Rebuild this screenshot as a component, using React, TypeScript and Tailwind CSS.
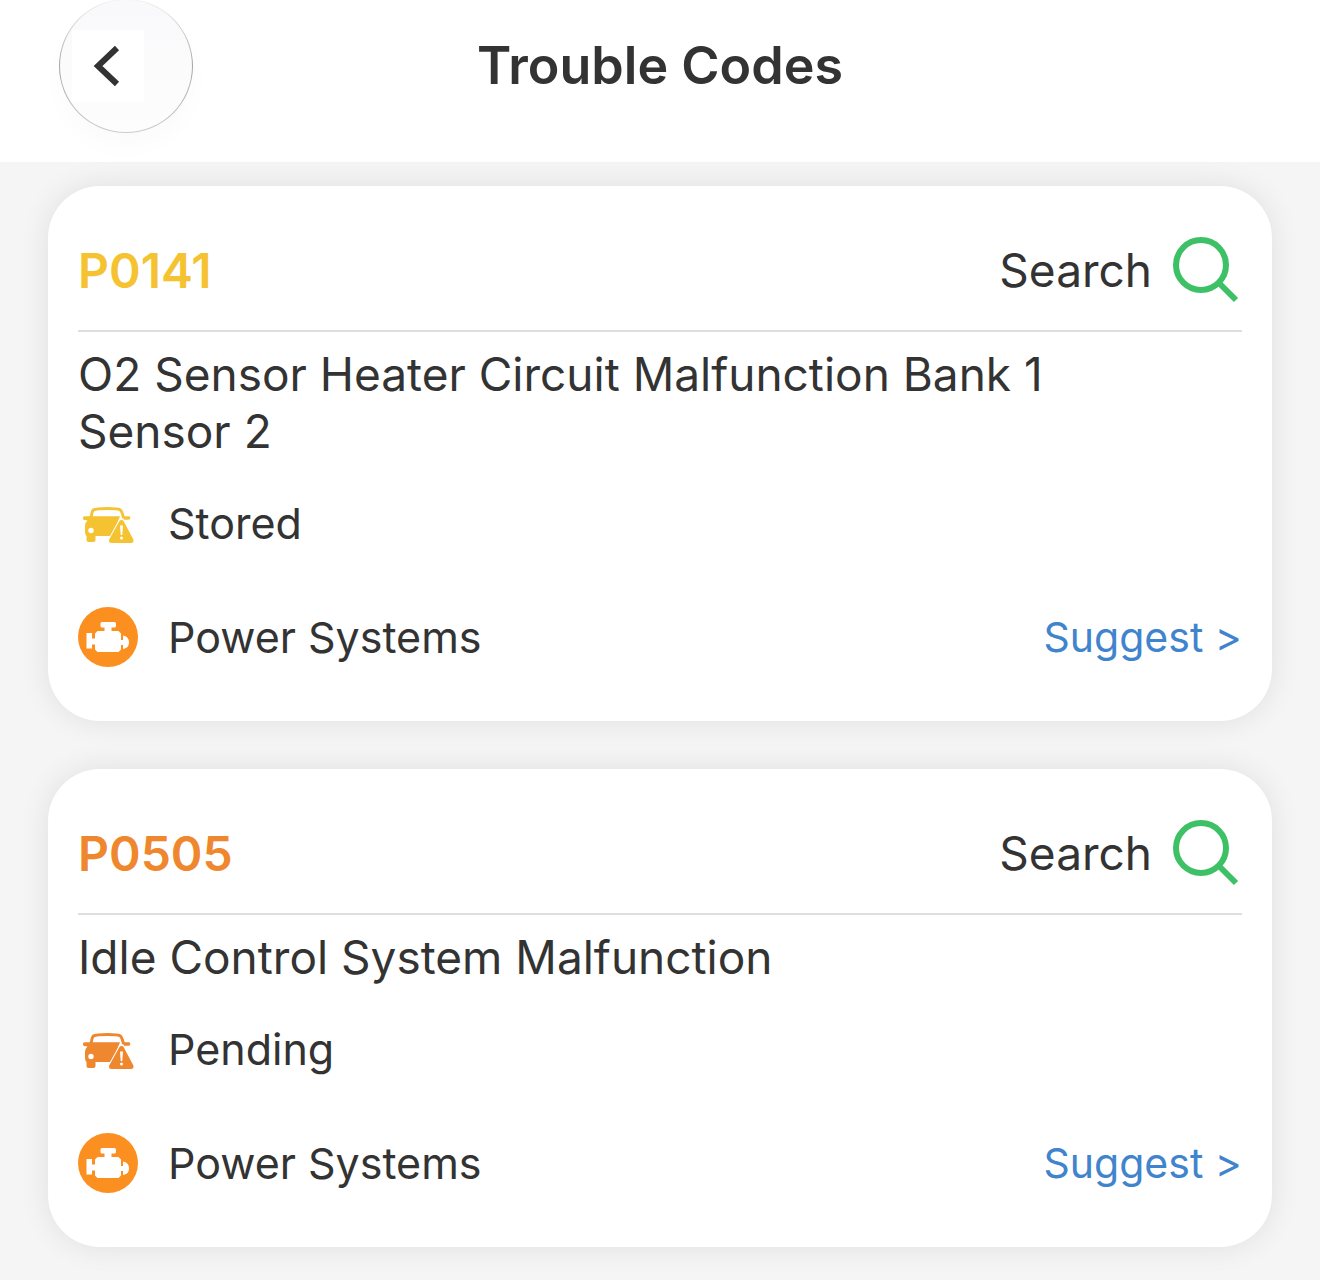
interface TroubleCode {
  code: string;
  description: string;
  status: string;
  system: string;
  color: string;
}

const troubleCodes: TroubleCode[] = [
  {
    code: "P0141",
    description: "O2 Sensor Heater Circuit Malfunction Bank 1 Sensor 2",
    status: "Stored",
    system: "Power Systems",
    color: "text-[#f5c331]",
  },
  {
    code: "P0505",
    description: "Idle Control System Malfunction",
    status: "Pending",
    system: "Power Systems",
    color: "text-[#ee872d]",
  },
];

function SearchIcon() {
  return (
    <svg className="w-[70px] h-[70px]" fill="none" stroke="#3dc066" viewBox="0 0 70 70" aria-hidden="true">
      <circle cx="29" cy="30" r="25" strokeWidth={6} />
      <path d="M47 48L64 65" strokeWidth={6} />
    </svg>
  );
}

function CarWarningIcon() {
  return (
    <svg className="w-[60px] h-[60px]" fill="currentColor" viewBox="0 0 60 60" aria-hidden="true">
      <path
        d="M13 25C13.500 19.500 14 17 15.500 15.800C18 14.500 24 14.400 29.500 14.400C35 14.400 40 14.500 42 15.700C44 17 44.500 19 45.500 24"
        fill="none"
        stroke="currentColor"
        strokeWidth={3}
      />
      <path d="M5 23.500Q5.500 22.300 7 22.300H42L34 42H17.500V46Q17.500 48 15.500 48H10.500Q8.500 48 8.500 46V42Q7 41 7 37V32Q7 28.500 9.500 26.500L6 26Q4.500 25 5 23.500Z" />
      <path d="M44 22.300H51Q52.500 22.300 52.300 24Q52.200 25.800 50.500 25.800H46Z" />
      <circle cx="13" cy="36.500" r="2.700" fill="white" />
      <path d="M43.500 28.500L53 46.500H33.500Z" stroke="white" strokeWidth={7} strokeLinejoin="round" />
      <path d="M43.500 28.500L53 46.500H33.500Z" stroke="currentColor" strokeWidth={5} strokeLinejoin="round" />
      <path d="M42 31.500H45L44.300 41H42.700Z" fill="white" />
      <circle cx="43.500" cy="44" r="1.500" fill="white" />
    </svg>
  );
}

function EngineIcon() {
  return (
    <svg className="w-[60px] h-[60px]" viewBox="0 0 60 60" aria-hidden="true">
      <circle cx="30" cy="30" r="30" fill="#fb8f1f" />
      <path
        d="M24 15H36.500Q38 15 38 16.500V19Q38 20.500 36.500 20.500H33.500V24H40.500L43 26.500V33H45V28.500Q51 29.500 51 35.500Q51 41 45 42V38H43V42.500L40.500 45H19.500L17 42.500V37.500H14V41.500H8.500V26H14V31.500H17V26.500L19.500 24H26.500V20.500H24Q22.500 20.500 22.500 19V16.500Q22.500 15 24 15Z"
        fill="white"
      />
    </svg>
  );
}

function TroubleCodeCard({ item }: { item: TroubleCode }) {
  return (
    <article className="bg-white rounded-[52px] px-[30px] pb-[54px] shadow-[0_0_30px_rgba(0,0,0,0.09)]">
      <div className="flex items-center justify-between pt-6 h-[146px] border-b-2 border-[#dedede]">
        <h2 className={`text-[48px] leading-[57px] font-semibold ${item.color}`}>{item.code}</h2>
        <button type="button" className="flex items-center gap-5 text-[46px] leading-[57px]">
          Search
          <SearchIcon />
        </button>
      </div>
      <p className="pt-[14px] pr-12 text-[46px] leading-[57px]">{item.description}</p>
      <div className="flex items-center gap-[30px] mt-[34px]">
        <span className={item.color}>
          <CarWarningIcon />
        </span>
        <span className="text-[43px] leading-[56px] pb-0.5">{item.status}</span>
      </div>
      <div className="flex items-center gap-[30px] mt-[53px]">
        <EngineIcon />
        <span className="text-[43px] leading-[56px]">{item.system}</span>
        <a href="#suggest" className="ml-auto text-[41px] leading-[56px] text-[#3f84cc]">
          Suggest &gt;
        </a>
      </div>
    </article>
  );
}

export default function App() {
  return (
    <div className="min-h-screen bg-[#f5f5f5] text-[#333333] font-['Inter',sans-serif]">
      <header className="h-[162px] pb-[30px] px-[59px] bg-white grid grid-cols-[1fr_auto_1fr] content-center items-center">
        <button
          type="button"
          aria-label="Back"
          className="size-[134px] p-px rounded-full bg-linear-to-b from-[#f4f4f4] via-[#a6a6a6] to-[#cccccc] shadow-[0_14px_24px_rgba(0,0,0,0.02)]"
        >
          <span className="flex items-center size-full rounded-full pl-3 bg-linear-to-b from-[#f9f9fb] to-[#fdfdfd]">
            <svg className="size-[72px] bg-white" fill="none" stroke="currentColor" viewBox="0 0 72 72">
              <path d="M45 18L26 36L45 54" strokeWidth={6} />
            </svg>
          </span>
        </button>
        <h1 className="text-[52px] leading-[64px] font-semibold">Trouble Codes</h1>
      </header>
      <main className="flex flex-col gap-12 px-12 pt-6 pb-8">
        {troubleCodes.map((item) => (
          <TroubleCodeCard key={item.code} item={item} />
        ))}
      </main>
    </div>
  );
}
